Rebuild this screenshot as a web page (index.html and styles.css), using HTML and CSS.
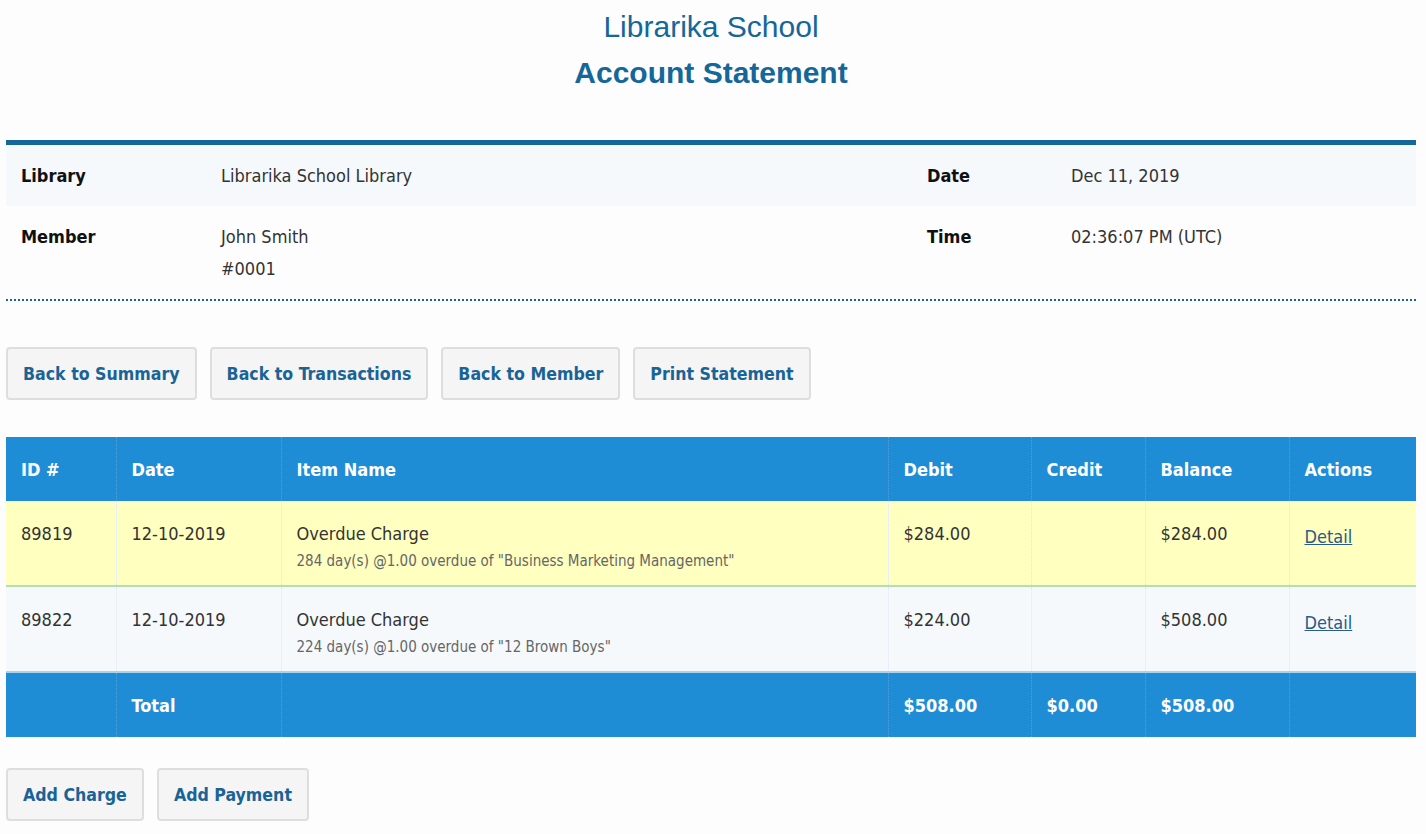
FILE: index.html
```html
<!DOCTYPE html>
<html lang="en">
<head>
  <meta charset="UTF-8">
  <title>Account Statement</title>
  <link rel="stylesheet" href="styles.css">
</head>
<body>
  <div class="page">
    <div class="heading">
      <div class="school">Librarika School</div>
      <h1>Account Statement</h1>
    </div>

    <div class="info">
      <div class="info-row shaded">
        <div class="label">Library</div>
        <div class="value">Librarika School Library</div>
        <div class="label">Date</div>
        <div class="value">Dec 11, 2019</div>
      </div>
      <div class="info-row tall">
        <div class="label">Member</div>
        <div class="value">John Smith<br>#0001</div>
        <div class="label">Time</div>
        <div class="value">02:36:07 PM (UTC)</div>
      </div>
    </div>

    <div class="actions top-actions">
      <button class="btn">Back to Summary</button>
      <button class="btn">Back to Transactions</button>
      <button class="btn">Back to Member</button>
      <button class="btn">Print Statement</button>
    </div>

    <table class="ledger">
      <colgroup>
        <col style="width: 110px">
        <col style="width: 165px">
        <col style="width: 607px">
        <col style="width: 143px">
        <col style="width: 114px">
        <col style="width: 144px">
        <col style="width: 127px">
      </colgroup>
      <thead>
        <tr>
          <th>ID #</th>
          <th>Date</th>
          <th>Item Name</th>
          <th>Debit</th>
          <th>Credit</th>
          <th>Balance</th>
          <th>Actions</th>
        </tr>
      </thead>
      <tbody>
        <tr class="highlight">
          <td>89819</td>
          <td>12-10-2019</td>
          <td>Overdue Charge<div class="desc">284 day(s) @1.00 overdue of "Business Marketing Management"</div></td>
          <td>$284.00</td>
          <td></td>
          <td>$284.00</td>
          <td><a href="#" class="detail">Detail</a></td>
        </tr>
        <tr class="plain">
          <td>89822</td>
          <td>12-10-2019</td>
          <td>Overdue Charge<div class="desc">224 day(s) @1.00 overdue of "12 Brown Boys"</div></td>
          <td>$224.00</td>
          <td></td>
          <td>$508.00</td>
          <td><a href="#" class="detail">Detail</a></td>
        </tr>
      </tbody>
      <tfoot>
        <tr>
          <td></td>
          <td>Total</td>
          <td></td>
          <td>$508.00</td>
          <td>$0.00</td>
          <td>$508.00</td>
          <td></td>
        </tr>
      </tfoot>
    </table>

    <div class="actions bottom-actions">
      <button class="btn">Add Charge</button>
      <button class="btn">Add Payment</button>
    </div>
  </div>
</body>
</html>
```

FILE: styles.css
```css
body {
  margin: 0;
  background: #fdfdfd;
  font-family: "DejaVu Sans Condensed", "DejaVu Sans", sans-serif;
  font-size: 18px;
  color: #333;
}
.page {
  padding: 9px 10px 20px 6px;
}
.heading {
  text-align: center;
  color: #156699;
  font-family: "Liberation Sans", Arial, sans-serif;
}
.school {
  font-size: 30px;
  line-height: 36px;
}
.heading h1 {
  margin: 9px 0 0;
  font-size: 30px;
  line-height: 36px;
  padding-top: 1px;
}
.info {
  margin-top: 49px;
  border-top: 5px solid #156699;
  border-bottom: 2px dotted #156699;
}
.info-row {
  display: grid;
  grid-template-columns: 200px 706px 144px 1fr;
  padding: 15px 0;
  line-height: 31px;
}
.info-row.tall {
  line-height: 32px;
  padding-bottom: 14px;
}
.info-row.shaded {
  background: #f5f9fc;
}
.info-row > div {
  padding-left: 15px;
}
.info-row .label {
  font-weight: bold;
  color: #111;
}
.actions {
  display: flex;
  gap: 13px;
}
.top-actions {
  margin-top: 46px;
}
.bottom-actions {
  margin-top: 31px;
}
.btn {
  font-family: inherit;
  font-size: 17.6px;
  font-weight: bold;
  line-height: 20px;
  color: #1a6396;
  background: #f5f5f5;
  border: 2px solid #dedede;
  border-radius: 4px;
  padding: 15px 15px 14px;
  cursor: pointer;
}
.ledger {
  margin-top: 37px;
  width: 1410px;
  border-collapse: collapse;
  table-layout: fixed;
}
.ledger th,
.ledger td {
  text-align: left;
  vertical-align: top;
  padding: 22px 15px 20px;
  line-height: 22px;
  border-left: 1px dotted #dfe6ec;
}
.ledger th:first-child,
.ledger td:first-child {
  border-left: none;
}
.ledger thead th {
  background: #1f8dd6;
  color: #fff;
  border-left-color: #4aa3e0;
}
.ledger tbody td {
  padding-bottom: 12px;
  border-bottom: 2px solid #a9d2ef;
}
.ledger tr.highlight td {
  background: #ffffc0;
  border-bottom-color: #b3dcb8;
}
.ledger tr.plain td {
  background: #f5f9fc;
}
.ledger .desc {
  font-size: 15px;
  line-height: 24px;
  margin-top: 4px;
  color: #666;
}
.ledger tfoot td {
  background: #1f8dd6;
  color: #fff;
  font-weight: bold;
  border-left-color: #4aa3e0;
}
.detail {
  display: inline-block;
  margin-top: 3px;
  color: #2a5a88;
}
```
